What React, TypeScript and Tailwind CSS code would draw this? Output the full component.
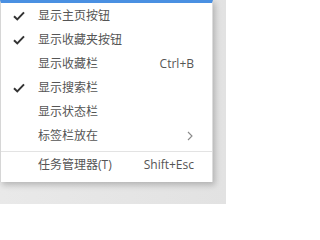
const items = [
  { label: "显示主页按钮", checked: true },
  { label: "显示收藏夹按钮", checked: true },
  { label: "显示收藏栏", shortcut: "Ctrl+B" },
  { label: "显示搜索栏", checked: true },
  { label: "显示状态栏" },
  { label: "标签栏放在", submenu: true },
];

function Check() {
  return (
    <svg width="12" height="10" viewBox="0 0 12 10" fill="none">
      <path d="M1 5.2 L4.3 8.4 L11 1.4" stroke="#333" strokeWidth="2" />
    </svg>
  );
}

function Row({ label, checked, shortcut, submenu }: { label: string; checked?: boolean; shortcut?: string; submenu?: boolean }) {
  return (
    <div className="flex items-center h-6">
      <div className="w-[37px] pl-3 flex items-center">{checked && <Check />}</div>
      <span className="flex-1 text-[12px] text-[#555]">{label}</span>
      {shortcut && <span className="text-[12px] text-[#555] pr-[18px]">{shortcut}</span>}
      {submenu && (
        <svg className="mr-[19px]" width="6" height="10" viewBox="0 0 6 10" fill="none">
          <path d="M1 1 L5 5 L1 9" stroke="#8a8a8a" strokeWidth="1.1" />
        </svg>
      )}
    </div>
  );
}

export default function App() {
  return (
    <div
      className="w-[226px] h-[204px] bg-[linear-gradient(to_right,#e9e9e9,#e2e2e2)] overflow-hidden"
      style={{ fontFamily: '"Open Sans", "Noto Sans CJK SC", sans-serif' }}
    >
      <div className="w-[213px] h-[182px] bg-white border-t-[3px] border-[#4a90e2] border-l border-l-[#d6d6d6] border-r border-r-[#dcdcdc] shadow-[2px_3px_6px_rgba(0,0,0,0.22)] pt-px">
        {items.map((it) => (
          <Row key={it.label} {...it} />
        ))}
        <div className="h-px bg-[#e3e3e3] mt-[3px] mb-[1px]" />
        <div className="flex items-center h-6">
          <div className="w-[37px]" />
          <span className="flex-1 text-[12px] text-[#555]">任务管理器(T)</span>
          <span className="text-[12px] text-[#555] pr-[18px]">Shift+Esc</span>
        </div>
      </div>
    </div>
  );
}
